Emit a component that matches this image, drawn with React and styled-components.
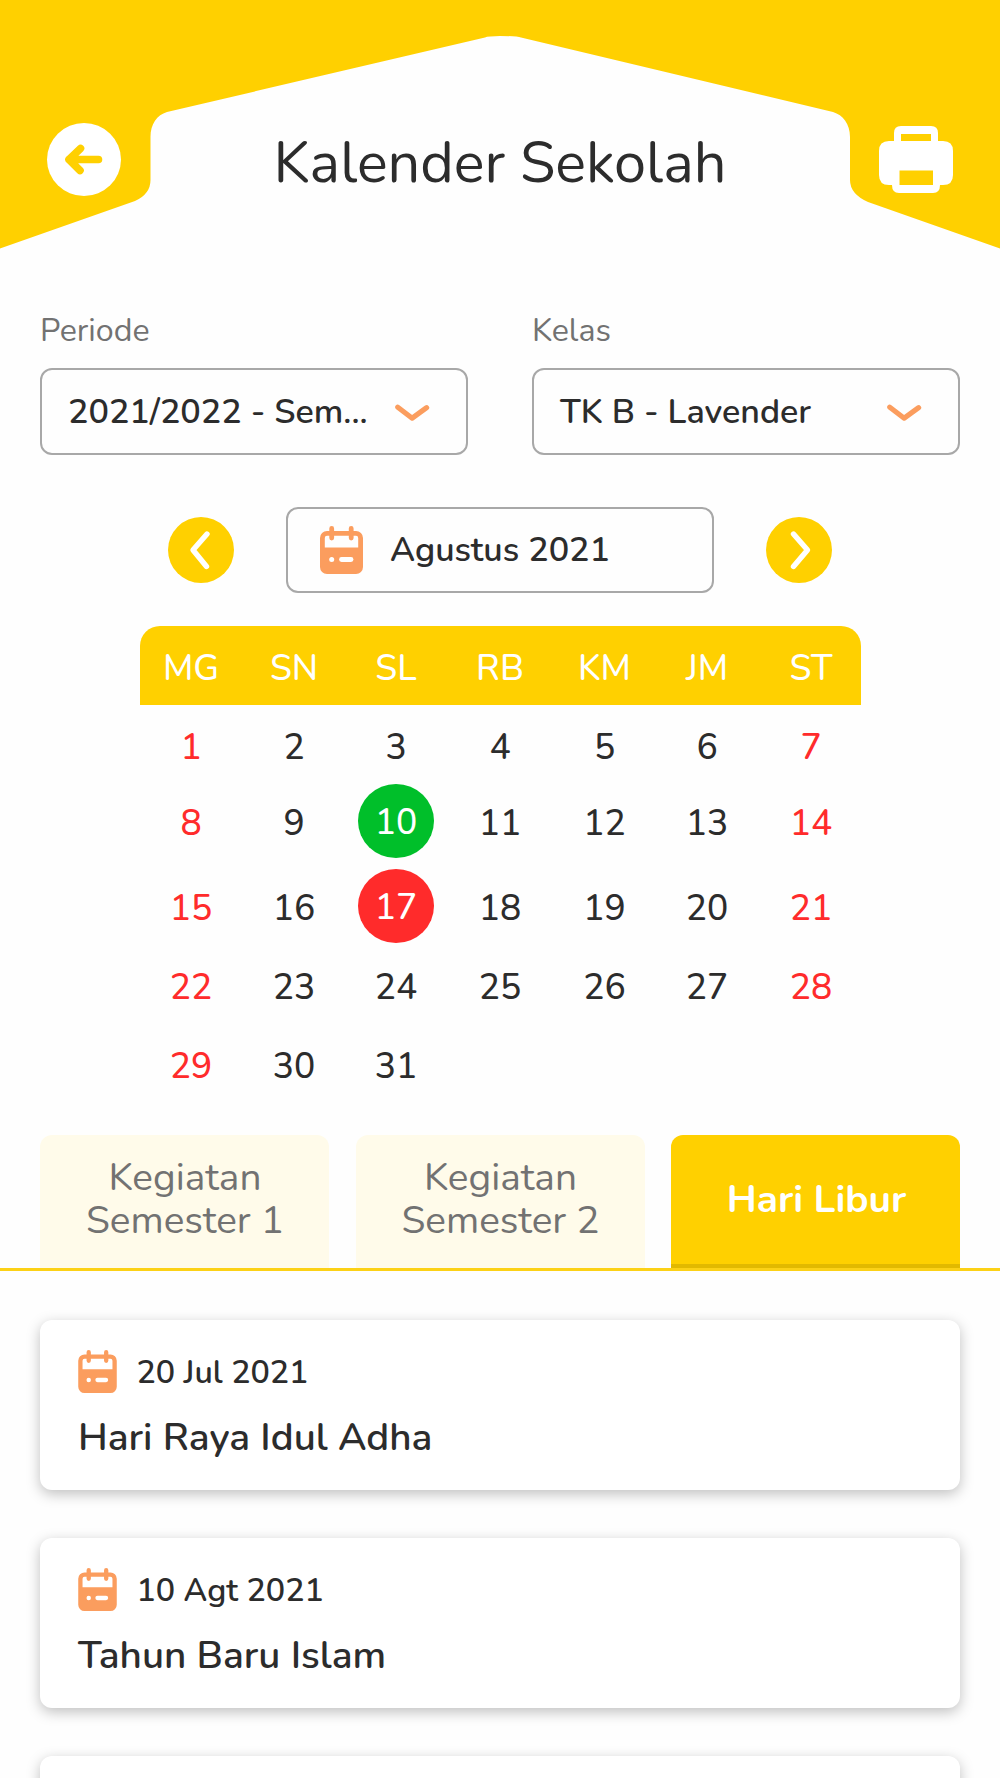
import styled, { createGlobalStyle } from "styled-components";

const GlobalStyle = createGlobalStyle`
  * {
    box-sizing: border-box;
  }
  body {
    margin: 0;
    background-color: #fefefe;
    color: #2c2c2c;
    font-family: Nunito, Lato, "Noto Sans", sans-serif;
  }
`;

const Container = styled.div`
  width: 1000px;
  height: 1778px;
  overflow: hidden;
`;

const Header = styled.header`
  position: relative;
  height: 250px;
  padding: 0 47px;
  display: flex;
  align-items: flex-start;
  justify-content: space-between;
`;

const HeaderShape = styled.svg`
  position: absolute;
  top: 0;
  left: 0;
`;

const BackButton = styled.button`
  position: relative;
  width: 74px;
  height: 73px;
  margin-top: 123px;
  padding: 0;
  border: none;
  border-radius: 50%;
  background-color: white;
`;

const PrintButton = styled.button`
  position: relative;
  width: 74px;
  height: 67px;
  margin-top: 126px;
  padding: 0;
  border: none;
  background: none;
`;

const Title = styled.h1`
  position: relative;
  margin: 129px 0 0;
  font-size: 57.6px;
  font-weight: 400;
  line-height: 68px;
`;

const Filters = styled.div`
  display: flex;
  justify-content: space-between;
  padding: 61px 40px 0;
`;

const Filter = styled.div`
  width: 428px;
`;

const Label = styled.div`
  margin-bottom: 18px;
  color: #727272;
  font-size: 32.2px;
  line-height: 39px;
`;

const Field = styled.div`
  display: flex;
  align-items: center;
  width: 428px;
  height: 87px;
  border: 2px solid #a8a8a8;
  border-radius: 12px;
  font-size: 34.1px;
  font-weight: 580;
`;

const Select = styled(Field)`
  justify-content: space-between;
  padding: 0 36px 0 26px;
`;

const MonthBar = styled.div`
  display: flex;
  align-items: center;
  justify-content: center;
  gap: 52px;
  margin-top: 52px;
`;

const RoundButton = styled.button`
  width: 66px;
  height: 66px;
  padding: 0;
  border: none;
  border-radius: 50%;
  background-color: #ffd000;
`;

const MonthField = styled(Field)`
  gap: 27px;
  height: 86px;
  padding-left: 32px;
`;

const Calendar = styled.div`
  width: 721px;
  margin: 33px 0 0 140px;
  font-size: 35.4px;
  font-weight: 550;
`;

const Week = styled.div`
  display: grid;
  grid-template-columns: 102px 104px 100px 108px 101px 104px 104px;
  grid-template-rows: 100%;
  align-items: center;
  justify-items: center;
  height: ${(props) => props.$height}px;
`;

const WeekHead = styled(Week)`
  padding-top: 4px;
  border-radius: 20px 20px 0 0;
  background-color: #ffd000;
  color: white;
`;

const Day = styled.span`
  color: ${(props) => (props.$off ? "#ff2b2b" : "inherit")};
`;

const MarkedDay = styled.span`
  display: flex;
  align-items: center;
  justify-content: center;
  width: 76px;
  height: 74px;
  margin-bottom: 4px;
  padding-top: 2px;
  border-radius: 50%;
  background-color: ${(props) => props.$color};
  color: white;
`;

const Tabs = styled.div`
  display: flex;
  justify-content: space-between;
  height: 136px;
  margin-top: 18px;
  padding: 0 40px;
  border-bottom: 3px solid #fcd116;
`;

const Tab = styled.button`
  width: 289px;
  padding: ${(props) => (props.$active ? "2px 29px 0 31px" : "0 29px 4px 30px")};
  border: none;
  border-bottom: ${(props) => props.$active && "4px solid #e2b900"};
  border-radius: 12px 12px 0 0;
  background-color: ${(props) => (props.$active ? "#ffd000" : "#fffbea")};
  color: ${(props) => (props.$active ? "white" : "#727272")};
  font-family: inherit;
  font-size: 38.8px;
  font-weight: ${(props) => (props.$active ? 700 : 400)};
  line-height: 42.5px;
`;

const List = styled.div`
  display: flex;
  flex-direction: column;
  gap: 48px;
  padding: 49px 40px 0;
`;

const Card = styled.div`
  flex: none;
  height: 170px;
  padding: 30px 38px 0;
  border-radius: 12px;
  background-color: white;
  box-shadow: 0 4px 14px rgba(0, 0, 0, 0.25);
`;

const CardDate = styled.div`
  display: flex;
  align-items: center;
  gap: 19.5px;
  height: 43px;
  font-size: 32.2px;
  font-weight: 580;
`;

const CardTitle = styled.div`
  margin-top: 22px;
  font-size: 38.8px;
  font-weight: 580;
  line-height: 46px;
`;

const CalendarIcon = ({ width, height }) => (
  <svg width={width} height={height} viewBox="0 0 43 48" fill="none">
    <path
      fill="#fb9d5e"
      fillRule="evenodd"
      d="M7 5H36A7 7 0 0 1 43 12V41A7 7 0 0 1 36 48H7A7 7 0 0 1 0 41V12A7 7 0 0 1 7 5ZM7 9.7Q4.8 9.7 4.8 12V21.5H38.2V12Q38.2 9.7 36 9.7Z"
    />
    <path d="M11.7 2.4V12M31.2 2.4V12" stroke="#fb9d5e" strokeWidth="4.8" strokeLinecap="round" />
    <circle cx="11.7" cy="33.5" r="2.5" fill="white" />
    <path d="M21.5 33.5H31" stroke="white" strokeWidth="4.8" strokeLinecap="round" />
  </svg>
);

const ChevronDown = () => (
  <svg width="35" height="20" viewBox="0 0 35 20" fill="none">
    <path
      d="M2.8 5.2L17.2 16.2L31.6 5.7"
      stroke="#fb9d5e"
      strokeWidth="5.2"
      strokeLinecap="round"
      strokeLinejoin="round"
    />
  </svg>
);

const Arrow = ({ d }) => (
  <svg width="66" height="66" viewBox="0 0 66 66" fill="none">
    <path d={d} stroke="white" strokeWidth="5.4" strokeLinecap="round" strokeLinejoin="round" />
  </svg>
);

const weekdays = ["MG", "SN", "SL", "RB", "KM", "JM", "ST"];

const weeks = [
  { height: 83, days: [1, 2, 3, 4, 5, 6, 7] },
  { height: 69, days: [8, 9, 10, 11, 12, 13, 14] },
  { height: 102, days: [15, 16, 17, 18, 19, 20, 21] },
  { height: 55, days: [22, 23, 24, 25, 26, 27, 28] },
  { height: 103, days: [29, 30, 31] },
];

const marked = { 10: "#00bf2a", 17: "#ff2b2b" };

const holidays = [
  { date: "20 Jul 2021", title: "Hari Raya Idul Adha" },
  { date: "10 Agt 2021", title: "Tahun Baru Islam" },
];

const App = () => {
  return (
    <Container>
      <GlobalStyle />
      <Header>
        <HeaderShape width="1000" height="250" viewBox="0 0 1000 250">
          <path
            fill="#ffd000"
            d="M0 0H1000V248.5L868 202Q850 194 850 180V137C850 124 843 115 833 112L521 37.5Q517 36 500 36Q488 36 485 37.5L167 112C157 115 150.5 124 150.5 137V180Q150.5 194 135 201L0 248.5Z"
          />
        </HeaderShape>
        <BackButton>
          <svg width="74" height="73" viewBox="0 0 74 73" fill="none">
            <path
              d="M33.5 25.5L22 36.5L33 47.5M22 36.5H51.5"
              stroke="#ffd000"
              strokeWidth="7.6"
              strokeLinecap="round"
              strokeLinejoin="round"
            />
          </svg>
        </BackButton>
        <Title>Kalender Sekolah</Title>
        <PrintButton>
          <svg width="74" height="67" viewBox="0 0 74 67">
            <path
              fill="white"
              fillRule="evenodd"
              d="M22 0H52Q59 0 59 7V15H64Q74 15 74 25V49Q74 59 64 59H61Q61 67 54 67H20Q13 67 13 59H10Q0 59 0 49V25Q0 15 10 15H15V7Q15 0 22 0ZM22 8V15H52V8ZM20.5 44.5V59H54V44.5Z"
            />
          </svg>
        </PrintButton>
      </Header>
      <Filters>
        <Filter>
          <Label>Periode</Label>
          <Select>
            <span>2021/2022 - Sem...</span>
            <ChevronDown />
          </Select>
        </Filter>
        <Filter>
          <Label>Kelas</Label>
          <Select>
            <span>TK B - Lavender</span>
            <ChevronDown />
          </Select>
        </Filter>
      </Filters>
      <MonthBar>
        <RoundButton>
          <Arrow d="M39 17L25 33L38.5 49.5" />
        </RoundButton>
        <MonthField>
          <CalendarIcon width={43} height={48} />
          <span>Agustus 2021</span>
        </MonthField>
        <RoundButton>
          <Arrow d="M27.5 17L41.5 33L27.5 49.5" />
        </RoundButton>
      </MonthBar>
      <Calendar>
        <WeekHead $height={79}>
          {weekdays.map((name) => (
            <span key={name}>{name}</span>
          ))}
        </WeekHead>
        {weeks.map((week) => (
          <Week key={week.days[0]} $height={week.height}>
            {week.days.map((day, i) =>
              marked[day] ? (
                <MarkedDay key={day} $color={marked[day]}>
                  {day}
                </MarkedDay>
              ) : (
                <Day key={day} $off={i === 0 || i === 6}>
                  {day}
                </Day>
              )
            )}
          </Week>
        ))}
      </Calendar>
      <Tabs>
        <Tab>Kegiatan Semester 1</Tab>
        <Tab>Kegiatan Semester 2</Tab>
        <Tab $active>Hari Libur</Tab>
      </Tabs>
      <List>
        {holidays.map((holiday) => (
          <Card key={holiday.title}>
            <CardDate>
              <CalendarIcon width={39} height={43} />
              <span>{holiday.date}</span>
            </CardDate>
            <CardTitle>{holiday.title}</CardTitle>
          </Card>
        ))}
        <Card />
      </List>
    </Container>
  );
};

export default App;
